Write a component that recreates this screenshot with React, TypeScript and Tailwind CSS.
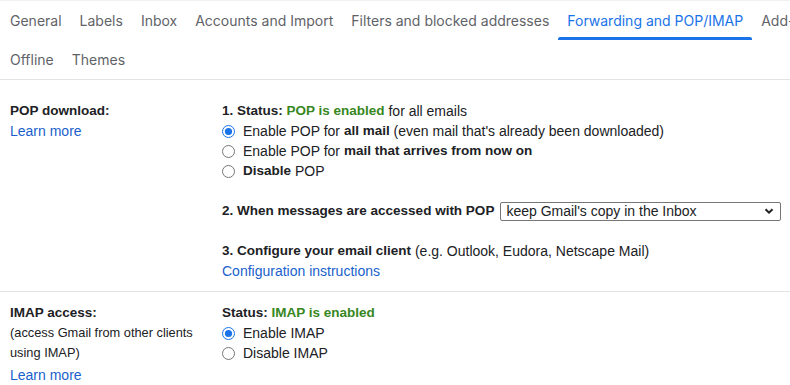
import React from "react";

const tabs1 = ["General", "Labels", "Inbox", "Accounts and Import", "Filters and blocked addresses", "Forwarding and POP/IMAP", "Add-ons"];
const tabs2 = ["Offline", "Themes"];

function Radio({ checked }: { checked?: boolean }) {
  return checked ? (
    <svg width="13" height="13" viewBox="0 0 13 13" className="shrink-0">
      <circle cx="6.5" cy="6.5" r="6" fill="white" stroke="#1a73e8" strokeWidth="1" />
      <circle cx="6.5" cy="6.5" r="3.6" fill="#1a73e8" />
    </svg>
  ) : (
    <svg width="13" height="13" viewBox="0 0 13 13" className="shrink-0">
      <circle cx="6.5" cy="6.5" r="6" fill="white" stroke="#767676" strokeWidth="1" />
    </svg>
  );
}

const row = "flex h-[20px] items-center whitespace-pre";
const B = ({ children, className = "" }: { children: React.ReactNode; className?: string }) => (
  <span className={`text-[13.5px] font-bold ${className}`}>{children}</span>
);

export default function App() {
  return (
    <div className="h-[385px] w-[790px] overflow-hidden bg-white text-[14px] leading-[20px] text-[#202124]" style={{ fontFamily: '"Liberation Sans", Arial, sans-serif' }}>
      <div className="border-b border-[#e3e3e3] font-['Inter',sans-serif] text-[14px] text-[#5f6368]">
        <div className="h-px bg-[#f1f1f1]" />
        <div className="flex h-[39px] whitespace-nowrap">
          {tabs1.map((t, i) => (
            <div key={t} className={`relative flex items-center ${i === 0 ? "pl-[10px] pr-[9px]" : "px-[9px]"} ${t.startsWith("Forwarding") ? "text-[#1a73e8]" : ""}`}>
              {t}
              {t.startsWith("Forwarding") && <span className="absolute bottom-0 left-0 right-0 h-[3px] rounded-t-[2px] bg-[#1a73e8]" />}
            </div>
          ))}
        </div>
        <div className="flex h-[39px] items-center">
          {tabs2.map((t, i) => (
            <div key={t} className={i === 0 ? "pl-[10px] pr-[9px]" : "px-[9px]"}>{t}</div>
          ))}
        </div>
      </div>

      <div className="flex border-b border-[#e3e3e3] pb-[10px] pt-[21px]">
        <div className="w-[222px] shrink-0 pl-[10px]">
          <div className={row}><B>POP download:</B></div>
          <div className={`${row} text-[#1a5fcc]`}>Learn more</div>
        </div>
        <div>
          <div className={row}>
            <B>1. Status: </B>
            <B className="text-[#38871f]">POP is enabled</B>
            <span> for all emails</span>
          </div>
          <label className={`${row} gap-[8px]`}><Radio checked /><span className="flex items-center">Enable POP for <B>all mail</B> (even mail that's already been downloaded)</span></label>
          <label className={`${row} gap-[8px]`}><Radio /><span className="flex items-center">Enable POP for <B>mail that arrives from now on</B></span></label>
          <label className={`${row} gap-[8px]`}><Radio /><span className="flex items-center"><B>Disable</B> POP</span></label>
          <div className={`${row} mt-[20px]`}>
            <B>2. When messages are accessed with POP</B>
            <div className="ml-[6px] flex h-[19px] w-[281px] items-center justify-between rounded-[2px] border border-[#767676] pl-[5px] pr-[6px]">
              <span>keep Gmail's copy in the Inbox</span>
              <svg width="10" height="10" viewBox="0 0 10 10"><path d="M1.5 3.2 L5 6.7 L8.5 3.2" fill="none" stroke="#202124" strokeWidth="2" /></svg>
            </div>
          </div>
          <div className={`${row} mt-[20px]`}><B>3. Configure your email client</B> (e.g. Outlook, Eudora, Netscape Mail)</div>
          <div className={`${row} text-[#1a5fcc]`}>Configuration instructions</div>
        </div>
      </div>

      <div className="flex pt-[11px]">
        <div className="w-[222px] shrink-0 pl-[10px]">
          <div className={row}><B>IMAP access:</B></div>
          <div className={`${row} text-[12.8px]`}>(access Gmail from other clients</div>
          <div className={`${row} text-[12.8px]`}>using IMAP)</div>
          <div className={`${row} mt-[2px] text-[#1a5fcc]`}>Learn more</div>
        </div>
        <div>
          <div className={row}><B>Status: </B><B className="text-[#38871f]">IMAP is enabled</B></div>
          <label className={`${row} gap-[8px]`}><Radio checked /><span>Enable IMAP</span></label>
          <label className={`${row} gap-[8px]`}><Radio /><span>Disable IMAP</span></label>
        </div>
      </div>
    </div>
  );
}
